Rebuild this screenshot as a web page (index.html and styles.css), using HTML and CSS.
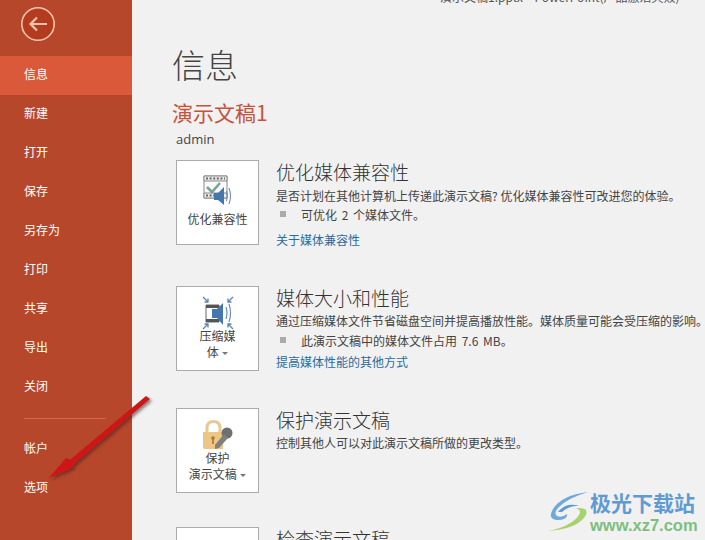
FILE: index.html
```html
<!DOCTYPE html>
<html lang="zh-CN">

<head>
    <meta charset="UTF-8">
    <meta name="viewport" content="width=device-width, initial-scale=1.0">
    <title>信息</title>
    <link rel="stylesheet" href="styles.css">
</head>

<body>
    <div class="app">
        <!-- 左侧菜单 -->
        <nav class="side">
            <div class="back">
                <svg width="36" height="36" viewBox="0 0 36 36" fill="none" stroke="#f8c3ae">
                    <circle cx="18" cy="18" r="16.2" stroke-width="1.6" fill="#b23c1d" />
                    <path d="M27 18H10.5M17 11.5L10.5 18L17 24.5" stroke-width="2.2" />
                </svg>
            </div>
            <a class="item active">信息</a>
            <a class="item">新建</a>
            <a class="item">打开</a>
            <a class="item">保存</a>
            <a class="item">另存为</a>
            <a class="item">打印</a>
            <a class="item">共享</a>
            <a class="item">导出</a>
            <a class="item">关闭</a>
            <div class="line"></div>
            <a class="item">帐户</a>
            <a class="item">选项</a>
        </nav>

        <!-- 右侧内容 -->
        <main class="main">
            <div class="caption">演示文稿1.pptx - PowerPoint(产品激活失败)</div>
            <h1 class="page-title">信息</h1>
            <div class="doc-name">演示文稿1</div>
            <div class="doc-path">admin</div>

            <section class="block block-first">
                <div class="tile">
                    <svg width="30" height="31" viewBox="0 0 30 31">
                        <path d="M1 1H24V23H1Z" fill="#fafafa" stroke="#8a8a8a" />
                        <path d="M1 1H24V6H1ZM1 18H24V23H1Z" fill="#ececec" stroke="#8a8a8a" />
                        <path d="M3 3.5H22M3 20.5H13" stroke="#666" stroke-width="2" stroke-dasharray="2 1.6" />
                        <path d="M4 12L9 17L17 8" fill="none" stroke="#79a394" stroke-width="2.6" />
                        <path d="M11 18H15L21 12V30L15 25H11Z" fill="#4577ad" />
                        <path d="M23.5 16Q25 21 23.5 26M26 13Q29 21 26 29" fill="none" stroke="#6a8fb8" stroke-width="1.1" />
                    </svg>
                    <span class="tile-text">优化兼容性</span>
                </div>
                <div class="info">
                    <h2>优化媒体兼容性</h2>
                    <p>是否计划在其他计算机上传递此演示文稿? 优化媒体兼容性可改进您的体验。</p>
                    <p class="bullet">可优化 2 个媒体文件。</p>
                    <a class="more">关于媒体兼容性</a>
                </div>
            </section>

            <section class="block block-second">
                <div class="tile">
                    <svg width="32" height="34" viewBox="0 0 32 34">
                        <path d="M4 9H17V26H4Z" fill="#fff" stroke="#666" />
                        <path d="M4 9H17V12H4ZM4 23H17V26H4Z" fill="#555" />
                        <path d="M10 13H15L21 7V29L15 22H10Z" fill="#4577ad" />
                        <path d="M24 11Q26 17 24 23M27 8Q30 17 27 26" fill="none" stroke="#5d87b5" stroke-width="1.1" />
                        <path d="M1 1L6 6M6 2.5V6H2.5M31 1L26 6M26 2.5V6H29.5M1 33L6 28M2.5 28H6V31.5M31 33L26 28M29.5 28H26V31.5" fill="none" stroke="#5a86b0" stroke-width="1.3" />
                    </svg>
                    <span class="tile-text">压缩媒<br>体 <i class="caret"></i></span>
                </div>
                <div class="info">
                    <h2>媒体大小和性能</h2>
                    <p>通过压缩媒体文件节省磁盘空间并提高播放性能。媒体质量可能会受压缩的影响。</p>
                    <p class="bullet">此演示文稿中的媒体文件占用 7.6 MB。</p>
                    <a class="more">提高媒体性能的其他方式</a>
                </div>
            </section>

            <section class="block block-third">
                <div class="tile">
                    <svg width="32" height="30" viewBox="0 0 32 30">
                        <path d="M5 13V8Q5 1.5 11.5 1.5Q18 1.5 18 8V13" fill="none" stroke="#e9c98f" stroke-width="3" />
                        <path d="M1 12H21V29H3Q1 29 1 27Z" fill="#eec683" />
                        <circle cx="11" cy="18" r="1.8" fill="#9a7c45" />
                        <path d="M10.2 18H11.8V24H10.2Z" fill="#9a7c45" />
                        <circle cx="25" cy="13" r="5.5" fill="#6f6f6f" />
                        <path d="M22 14L26 18L17 28L13 29L13 25Z" fill="#808080" />
                    </svg>
                    <span class="tile-text">保护<br>演示文稿 <i class="caret"></i></span>
                </div>
                <div class="info">
                    <h2>保护演示文稿</h2>
                    <p>控制其他人可以对此演示文稿所做的更改类型。</p>
                </div>
            </section>

            <section class="block block-last">
                <div class="tile"></div>
                <div class="info">
                    <h2>检查演示文稿</h2>
                </div>
            </section>
        </main>
    </div>

    <!-- 标注箭头 -->
    <svg class="arrow" width="170" height="160" viewBox="0 0 170 160">
        <defs>
            <filter id="shadow" x="-20%" y="-20%" width="140%" height="140%">
                <feDropShadow dx="2" dy="2" stdDeviation="1.5" flood-color="#3a2020" flood-opacity="0.55" />
            </filter>
        </defs>
        <path d="M146 16L150 19L74 84L72 88L49 98L66 78L70 80Z" fill="#cf1313" filter="url(#shadow)" />
    </svg>

    <!-- 水印 -->
    <div class="mark">
        <svg width="42" height="42" viewBox="0 0 42 42">
            <path d="M40 1Q14 4 5 18Q-1 28 9 29Q20 29 19 23Q14 27 9 25Q5 22 11 16Q20 7 40 1Z" fill="#6ea9dc" />
            <path d="M10 21Q18 11 31 15Q22 14 14 21Z" fill="#5e9ad2" />
            <path d="M0 40Q30 38 38 24Q41 16 28 17Q34 19 31 24Q24 35 0 40Z" fill="#a6d36f" />
        </svg>
        <div>
            <div class="mark-name">极光下载站</div>
            <div class="mark-url">www.xz7.com</div>
        </div>
    </div>
</body>

</html>
```

FILE: styles.css
```css
/* 基本样式 */

* {
    box-sizing: border-box;
}

html,
body {
    margin: 0;
    height: 540px;
    overflow: hidden;
}

body {
    position: relative;
    font-family: "Noto Sans CJK SC", "Noto Sans", sans-serif;
    font-size: 12px;
    color: #444;
    background: #f1f1f1;
}

.app {
    display: flex;
    height: 540px;
}

/******************** 左侧菜单 ***********************/

.side {
    flex: none;
    width: 132px;
    background: #b7472a;
}

.back {
    height: 56px;
    padding: 6px 0 0 20px;
}

.back svg {
    display: block;
}

.item {
    display: block;
    height: 39px;
    padding-left: 24px;
    line-height: 36px;
    color: #fff;
}

.active {
    background: #d9593a;
}

.line {
    width: 82px;
    height: 1px;
    margin: 11px 0 11px 24px;
    background: #d9674b;
}

/******************** 右侧内容 ***********************/

.main {
    flex: auto;
    min-width: 0;
    padding-left: 40px;
}

.caption {
    height: 7px;
    margin: -3px 0 0 268px;
    line-height: 0;
    white-space: nowrap;
    word-spacing: 1px;
    color: #555;
}

.page-title {
    margin: 35px 0 0;
    font-size: 33px;
    font-weight: 300;
    line-height: 50px;
    color: #444;
}

.doc-name {
    margin-top: 8px;
    font-size: 21px;
    font-weight: 400;
    line-height: 30px;
    color: #c5533a;
}

.doc-path {
    margin: 2px 0 0 4px;
    font-family: "Open Sans", sans-serif;
    font-size: 13px;
    line-height: 20px;
    color: #444;
}

.block {
    display: flex;
    height: 85px;
    margin-left: 4px;
}

.block-first {
    margin-top: 11px;
}

.block-second {
    margin-top: 41px;
}

.block-third {
    margin-top: 37px;
}

.block-last {
    margin-top: 34px;
}

.tile {
    display: flex;
    flex: none;
    flex-direction: column;
    align-items: center;
    width: 83px;
    height: 85px;
    padding-top: 14px;
    border: 1px solid #ababab;
    background: #fff;
    text-align: center;
    line-height: 16px;
}

.tile svg {
    flex: none;
}

.block-first .tile-text {
    margin-top: 4px;
    line-height: 17px;
}

.block-second .tile {
    padding-top: 9px;
}

.block-second .tile-text {
    margin-top: -2px;
}

.block-third .tile {
    padding-top: 11px;
}

.caret {
    display: inline-block;
    margin-left: 1px;
    vertical-align: middle;
    border-top: 3px solid #777;
    border-left: 3px solid transparent;
    border-right: 3px solid transparent;
}

.info {
    flex: auto;
    min-width: 0;
    padding-left: 17px;
}

.info h2 {
    margin: 0 0 2px;
    font-size: 19px;
    font-weight: 300;
    line-height: 24px;
    color: #333;
}

.block-first h2 {
    margin-bottom: 3px;
}

.info p {
    margin: 0;
    line-height: 18px;
    white-space: nowrap;
}

.info .bullet {
    position: relative;
    padding-left: 25px;
    line-height: 19px;
    word-spacing: 2px;
}

.block-second .bullet {
    margin-top: 1px;
}

.bullet::before {
    content: "";
    position: absolute;
    left: 4px;
    top: 6px;
    width: 6px;
    height: 6px;
    background: #ababab;
}

.more {
    display: block;
    margin-top: 7px;
    line-height: 17px;
    color: #2b6a9e;
}

.block-second .more {
    margin-top: 3px;
}

/******************** 覆盖在页面上的箭头和水印 ***********************/

.arrow {
    position: absolute;
    left: 0;
    top: 380px;
}

.mark {
    position: absolute;
    left: 548px;
    top: 487px;
    display: flex;
    align-items: flex-end;
}

.mark-name {
    font-size: 21px;
    font-weight: 700;
    line-height: 30px;
    color: #5f9bd2;
}

.mark-url {
    font-family: "Liberation Sans", sans-serif;
    font-size: 16.5px;
    font-weight: 700;
    line-height: 16px;
    color: #7cc07f;
}
```
